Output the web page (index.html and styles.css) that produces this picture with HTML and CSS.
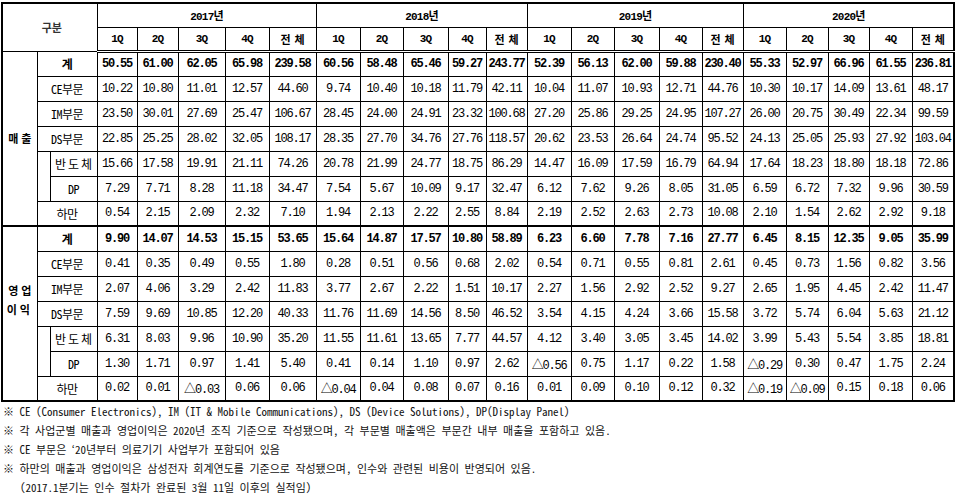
FILE: index.html
```html
<!DOCTYPE html>
<html lang="ko">
<head>
<meta charset="utf-8">
<title>삼성전자 사업부문별 실적</title>
<link rel="stylesheet" href="styles.css">
</head>
<body>
<div class="page">
<table class="fin">
<colgroup>
<col class="w35"><col class="w13"><col class="w47">
<col class="w40"><col class="w41"><col class="w47"><col class="w44"><col class="w47">
<col class="w44"><col class="w43"><col class="w45"><col class="w38"><col class="w41">
<col class="w44"><col class="w43"><col class="w45"><col class="w43"><col class="w41">
<col class="w43"><col class="w42"><col class="w41"><col class="w43"><col class="w42">
</colgroup>
<thead>
<tr class="yrow">
<th rowspan="2" colspan="3" class="gubun">구분</th>
<th colspan="5">2017년</th>
<th colspan="5">2018년</th>
<th colspan="5">2019년</th>
<th colspan="5">2020년</th>
</tr>
<tr class="qrow">
<th>1Q</th><th>2Q</th><th>3Q</th><th>4Q</th><th class="jc">전체</th>
<th>1Q</th><th>2Q</th><th>3Q</th><th>4Q</th><th class="jc">전체</th>
<th>1Q</th><th>2Q</th><th>3Q</th><th>4Q</th><th class="jc">전체</th>
<th>1Q</th><th>2Q</th><th>3Q</th><th>4Q</th><th class="jc">전체</th>
</tr>
</thead>
<tbody>
<tr class="sum">
<td rowspan="7" class="sec">매출</td><td colspan="2" class="lab">계</td>
<td>50.55</td><td>61.00</td><td>62.05</td><td>65.98</td><td>239.58</td>
<td>60.56</td><td>58.48</td><td>65.46</td><td>59.27</td><td>243.77</td>
<td>52.39</td><td>56.13</td><td>62.00</td><td>59.88</td><td>230.40</td>
<td>55.33</td><td>52.97</td><td>66.96</td><td>61.55</td><td>236.81</td>
</tr>
<tr>
<td colspan="2" class="lab">CE부문</td>
<td>10.22</td><td>10.80</td><td>11.01</td><td>12.57</td><td>44.60</td>
<td>9.74</td><td>10.40</td><td>10.18</td><td>11.79</td><td>42.11</td>
<td>10.04</td><td>11.07</td><td>10.93</td><td>12.71</td><td>44.76</td>
<td>10.30</td><td>10.17</td><td>14.09</td><td>13.61</td><td>48.17</td>
</tr>
<tr>
<td colspan="2" class="lab">IM부문</td>
<td>23.50</td><td>30.01</td><td>27.69</td><td>25.47</td><td>106.67</td>
<td>28.45</td><td>24.00</td><td>24.91</td><td>23.32</td><td>100.68</td>
<td>27.20</td><td>25.86</td><td>29.25</td><td>24.95</td><td>107.27</td>
<td>26.00</td><td>20.75</td><td>30.49</td><td>22.34</td><td>99.59</td>
</tr>
<tr>
<td colspan="2" class="lab">DS부문</td>
<td>22.85</td><td>25.25</td><td>28.02</td><td>32.05</td><td>108.17</td>
<td>28.35</td><td>27.70</td><td>34.76</td><td>27.76</td><td>118.57</td>
<td>20.62</td><td>23.53</td><td>26.64</td><td>24.74</td><td>95.52</td>
<td>24.13</td><td>25.05</td><td>25.93</td><td>27.92</td><td>103.04</td>
</tr>
<tr>
<td rowspan="2" class="ind"></td><td class="lab sp">반도체</td>
<td>15.66</td><td>17.58</td><td>19.91</td><td>21.11</td><td>74.26</td>
<td>20.78</td><td>21.99</td><td>24.77</td><td>18.75</td><td>86.29</td>
<td>14.47</td><td>16.09</td><td>17.59</td><td>16.79</td><td>64.94</td>
<td>17.64</td><td>18.23</td><td>18.80</td><td>18.18</td><td>72.86</td>
</tr>
<tr>
<td class="lab">DP</td>
<td>7.29</td><td>7.71</td><td>8.28</td><td>11.18</td><td>34.47</td>
<td>7.54</td><td>5.67</td><td>10.09</td><td>9.17</td><td>32.47</td>
<td>6.12</td><td>7.62</td><td>9.26</td><td>8.05</td><td>31.05</td>
<td>6.59</td><td>6.72</td><td>7.32</td><td>9.96</td><td>30.59</td>
</tr>
<tr>
<td colspan="2" class="lab">하만</td>
<td>0.54</td><td>2.15</td><td>2.09</td><td>2.32</td><td>7.10</td>
<td>1.94</td><td>2.13</td><td>2.22</td><td>2.55</td><td>8.84</td>
<td>2.19</td><td>2.52</td><td>2.63</td><td>2.73</td><td>10.08</td>
<td>2.10</td><td>1.54</td><td>2.62</td><td>2.92</td><td>9.18</td>
</tr>
<tr class="sum s2">
<td rowspan="7" class="sec op">영업<br>이익</td><td colspan="2" class="lab">계</td>
<td>9.90</td><td>14.07</td><td>14.53</td><td>15.15</td><td>53.65</td>
<td>15.64</td><td>14.87</td><td>17.57</td><td>10.80</td><td>58.89</td>
<td>6.23</td><td>6.60</td><td>7.78</td><td>7.16</td><td>27.77</td>
<td>6.45</td><td>8.15</td><td>12.35</td><td>9.05</td><td>35.99</td>
</tr>
<tr>
<td colspan="2" class="lab">CE부문</td>
<td>0.41</td><td>0.35</td><td>0.49</td><td>0.55</td><td>1.80</td>
<td>0.28</td><td>0.51</td><td>0.56</td><td>0.68</td><td>2.02</td>
<td>0.54</td><td>0.71</td><td>0.55</td><td>0.81</td><td>2.61</td>
<td>0.45</td><td>0.73</td><td>1.56</td><td>0.82</td><td>3.56</td>
</tr>
<tr>
<td colspan="2" class="lab">IM부문</td>
<td>2.07</td><td>4.06</td><td>3.29</td><td>2.42</td><td>11.83</td>
<td>3.77</td><td>2.67</td><td>2.22</td><td>1.51</td><td>10.17</td>
<td>2.27</td><td>1.56</td><td>2.92</td><td>2.52</td><td>9.27</td>
<td>2.65</td><td>1.95</td><td>4.45</td><td>2.42</td><td>11.47</td>
</tr>
<tr>
<td colspan="2" class="lab">DS부문</td>
<td>7.59</td><td>9.69</td><td>10.85</td><td>12.20</td><td>40.33</td>
<td>11.76</td><td>11.69</td><td>14.56</td><td>8.50</td><td>46.52</td>
<td>3.54</td><td>4.15</td><td>4.24</td><td>3.66</td><td>15.58</td>
<td>3.72</td><td>5.74</td><td>6.04</td><td>5.63</td><td>21.12</td>
</tr>
<tr>
<td rowspan="2" class="ind"></td><td class="lab sp">반도체</td>
<td>6.31</td><td>8.03</td><td>9.96</td><td>10.90</td><td>35.20</td>
<td>11.55</td><td>11.61</td><td>13.65</td><td>7.77</td><td>44.57</td>
<td>4.12</td><td>3.40</td><td>3.05</td><td>3.45</td><td>14.02</td>
<td>3.99</td><td>5.43</td><td>5.54</td><td>3.85</td><td>18.81</td>
</tr>
<tr>
<td class="lab">DP</td>
<td>1.30</td><td>1.71</td><td>0.97</td><td>1.41</td><td>5.40</td>
<td>0.41</td><td>0.14</td><td>1.10</td><td>0.97</td><td>2.62</td>
<td>△0.56</td><td>0.75</td><td>1.17</td><td>0.22</td><td>1.58</td>
<td>△0.29</td><td>0.30</td><td>0.47</td><td>1.75</td><td>2.24</td>
</tr>
<tr>
<td colspan="2" class="lab">하만</td>
<td>0.02</td><td>0.01</td><td>△0.03</td><td>0.06</td><td>0.06</td>
<td>△0.04</td><td>0.04</td><td>0.08</td><td>0.07</td><td>0.16</td>
<td>0.01</td><td>0.09</td><td>0.10</td><td>0.12</td><td>0.32</td>
<td>△0.19</td><td>△0.09</td><td>0.15</td><td>0.18</td><td>0.06</td>
</tr>
</tbody>
</table>
<div class="notes">
<p>※ CE (Consumer Electronics), IM (IT &amp; Mobile Communications), DS (Device Solutions), DP(Display Panel)</p>
<p>※ 각 사업군별 매출과 영업이익은 2020년 조직 기준으로 작성됐으며, 각 부문별 매출액은 부문간 내부 매출을 포함하고 있음.</p>
<p>※ CE 부문은 ‘20년부터 의료기기 사업부가 포함되어 있음</p>
<p>※ 하만의 매출과 영업이익은 삼성전자 회계연도를 기준으로 작성됐으며, 인수와 관련된 비용이 반영되어 있음.</p>
<p class="indent">(2017.1분기는 인수 절차가 완료된 3월 11일 이후의 실적임)</p>
</div>
</div>
</body>
</html>
```
FILE: styles.css
```css
html, body {
  margin: 0;
  padding: 0;
  background: #fff;
  overflow: hidden;
}
body {
  color: #000;
  font-family: "Liberation Mono", "Noto Sans CJK KR", monospace;
}
.page {
  padding: 2px 0 0 1px;
}
.fin {
  border-collapse: collapse;
  table-layout: fixed;
  width: 952px;
  border: 2px solid #000;
  font-size: 12px;
  letter-spacing: -1.2px;
}
.fin th, .fin td {
  border: 1px solid #000;
  padding: 0;
  text-align: center;
  vertical-align: middle;
  white-space: nowrap;
  overflow: hidden;
}
.fin tr { height: 25px; }
.fin thead tr { height: 24px; }
.fin th {
  font-size: 11px;
  font-weight: bold;
  letter-spacing: -0.8px;
}
.fin .gubun {
  font-family: "Noto Sans CJK KR", sans-serif;
  font-weight: bold;
  color: #333;
  letter-spacing: 0;
  text-indent: 4px;
}
.fin .qrow th {
  border-bottom: 3px double #000;
}
.fin .jc {
  font-family: "Noto Sans CJK KR", sans-serif;
  letter-spacing: 4px;
  text-indent: 4px;
}
.fin .sum td { font-weight: bold; }
.fin .s2 td { border-top: 2px solid #000; }
.fin .lab {
  font-family: "Noto Sans Mono CJK KR", "Liberation Mono", "Noto Sans CJK KR", monospace;
  font-size: 12px;
  letter-spacing: -0.5px;
}
.fin .sp {
  letter-spacing: 2px;
  text-indent: 2px;
}
.fin .sec {
  font-family: "Noto Sans CJK KR", sans-serif;
  font-size: 11px;
  font-weight: normal;
  letter-spacing: 3px;
  text-indent: 3px;
  line-height: 19px;
}
.fin .op { padding-bottom: 28px; }

.w35 { width: 35px; }
.w13 { width: 13px; }
.w47 { width: 47px; }
.w40 { width: 40px; }
.w41 { width: 41px; }
.w44 { width: 44px; }
.w43 { width: 43px; }
.w45 { width: 45px; }
.w38 { width: 38px; }
.w42 { width: 42px; }

.notes {
  font-family: "Noto Sans Mono CJK KR", "Liberation Mono", "Noto Sans CJK KR", monospace;
  font-size: 11px;
  line-height: 19px;
  color: #111;
  padding-left: 2px;
}
.notes p { margin: 0; white-space: nowrap; }
.notes .indent { padding-left: 17px; }
```
